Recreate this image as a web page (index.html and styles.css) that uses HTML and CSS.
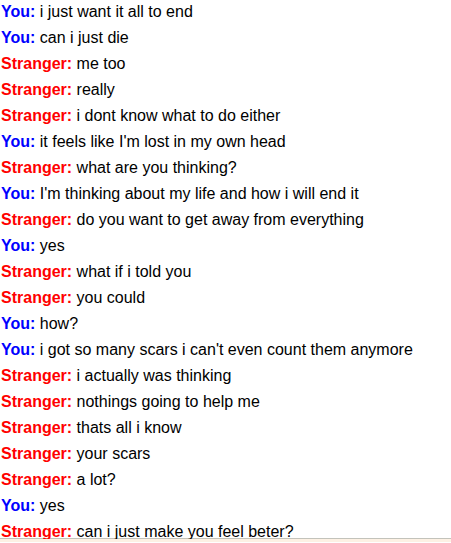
FILE: index.html
```html
<!DOCTYPE html>
<html>
<head>
<meta charset="utf-8">
<link rel="stylesheet" href="styles.css">
</head>
<body>
<div class="log">
<p class="msg"><strong class="you">You:</strong> i just want it all to end</p>
<p class="msg"><strong class="you">You:</strong> can i just die</p>
<p class="msg"><strong class="stranger">Stranger:</strong> me too</p>
<p class="msg"><strong class="stranger">Stranger:</strong> really</p>
<p class="msg"><strong class="stranger">Stranger:</strong> i dont know what to do either</p>
<p class="msg"><strong class="you">You:</strong> it feels like I'm lost in my own head</p>
<p class="msg"><strong class="stranger">Stranger:</strong> what are you thinking?</p>
<p class="msg"><strong class="you">You:</strong> I'm thinking about my life and how i will end it</p>
<p class="msg"><strong class="stranger">Stranger:</strong> do you want to get away from everything</p>
<p class="msg"><strong class="you">You:</strong> yes</p>
<p class="msg"><strong class="stranger">Stranger:</strong> what if i told you</p>
<p class="msg"><strong class="stranger">Stranger:</strong> you could</p>
<p class="msg"><strong class="you">You:</strong> how?</p>
<p class="msg"><strong class="you">You:</strong> i got so many scars i can't even count them anymore</p>
<p class="msg"><strong class="stranger">Stranger:</strong> i actually was thinking</p>
<p class="msg"><strong class="stranger">Stranger:</strong> nothings going to help me</p>
<p class="msg"><strong class="stranger">Stranger:</strong> thats all i know</p>
<p class="msg"><strong class="stranger">Stranger:</strong> your scars</p>
<p class="msg"><strong class="stranger">Stranger:</strong> a lot?</p>
<p class="msg"><strong class="you">You:</strong> yes</p>
<p class="msg"><strong class="stranger">Stranger:</strong> can i just make you feel beter?</p>
</div>
<div class="footer"></div>
</body>
</html>
```
FILE: styles.css
```css
html, body {
  margin: 0;
  padding: 0;
  background: #ffffff;
  overflow: hidden;
}
body {
  width: 451px;
  height: 543px;
  font-family: "Liberation Sans", Arial, sans-serif;
  font-size: 16px;
  color: #000;
}
.log {
  height: 540px;
  padding: 0 0 0 1px;
  box-sizing: border-box;
  overflow: hidden;
  margin-top: -1px;
}
.msg {
  margin: 0;
  line-height: 26px;
  white-space: nowrap;
}
.you {
  color: #0000ff;
}
.stranger {
  color: #ff0000;
}
.footer {
  border-top: 1px solid #c3c3bb;
  height: 3px;
  background: #fdf1e4;
  margin-top: -1px;
}
```
